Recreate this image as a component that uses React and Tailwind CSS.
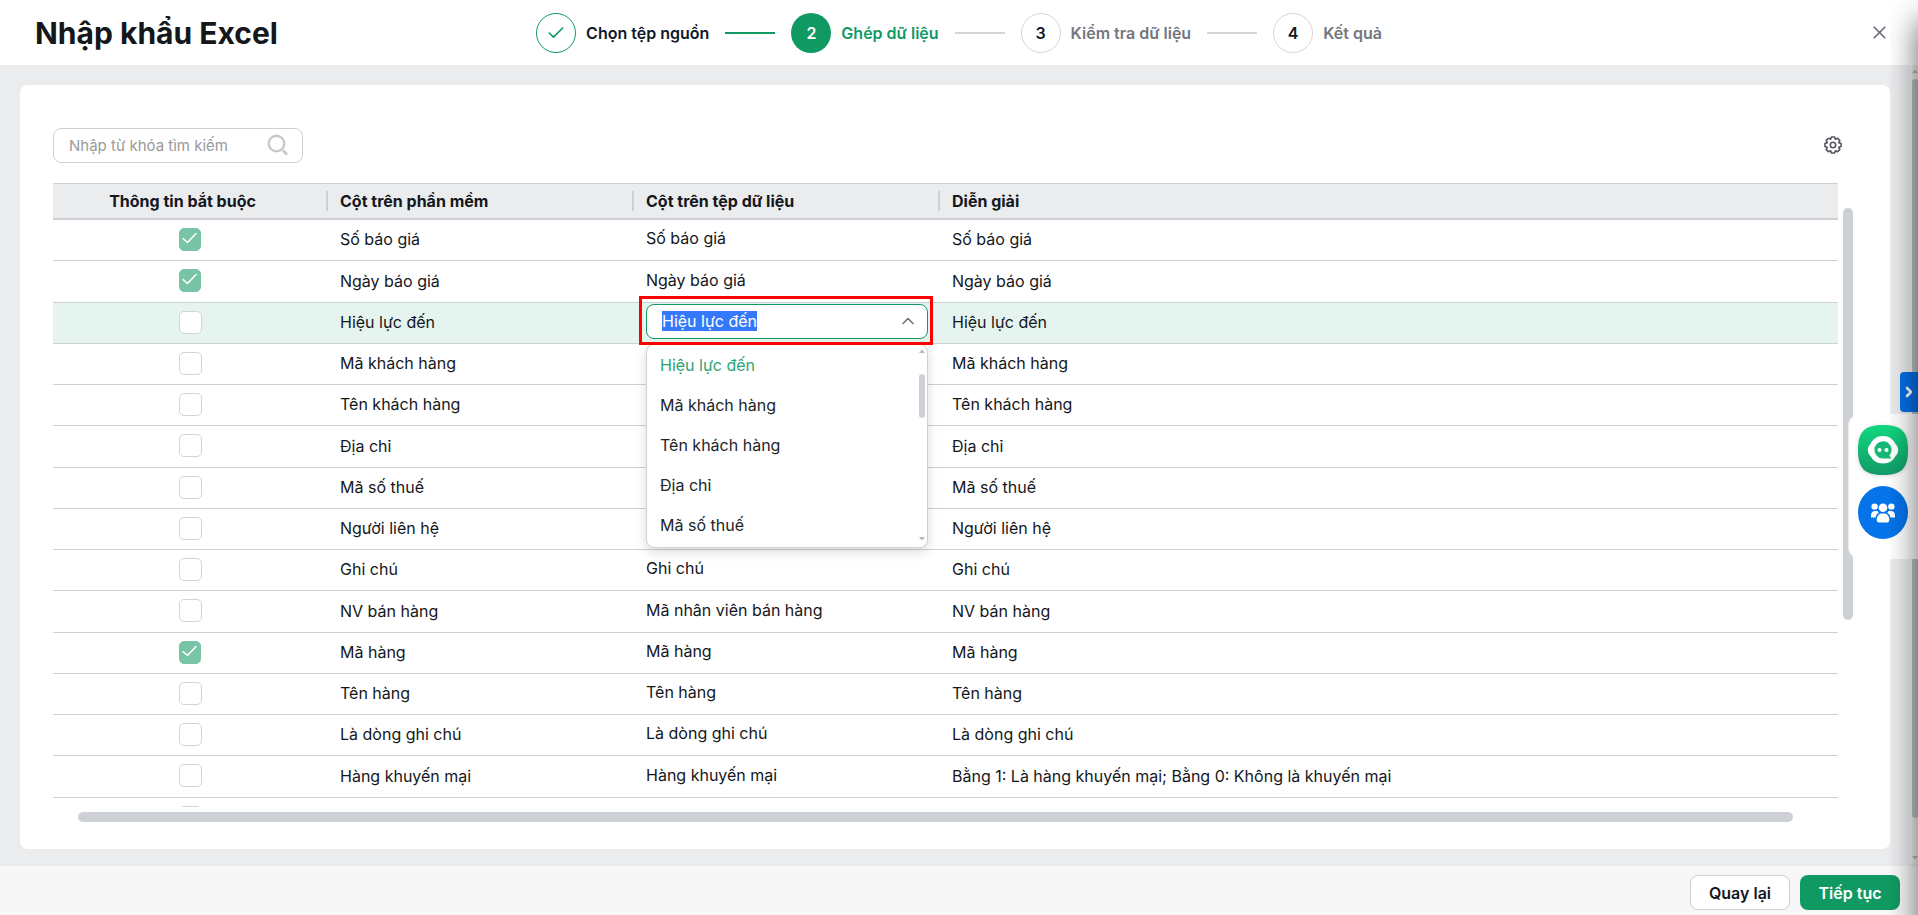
import React, { useEffect, useRef, useState } from 'react';
import { Check, ChevronRight, ChevronUp, X } from 'lucide-react';

const STEPS = [
  { label: 'Chọn tệp nguồn', state: 'done' },
  { label: 'Ghép dữ liệu', state: 'active' },
  { label: 'Kiểm tra dữ liệu', state: 'todo' },
  { label: 'Kết quả', state: 'todo' },
];

const ROWS = [
  { name: 'Số báo giá', column: 'Số báo giá', required: true },
  { name: 'Ngày báo giá', column: 'Ngày báo giá', required: true },
  { name: 'Hiệu lực đến', column: 'Hiệu lực đến', editing: true },
  { name: 'Mã khách hàng' },
  { name: 'Tên khách hàng' },
  { name: 'Địa chỉ' },
  { name: 'Mã số thuế' },
  { name: 'Người liên hệ' },
  { name: 'Ghi chú', column: 'Ghi chú' },
  { name: 'NV bán hàng', column: 'Mã nhân viên bán hàng' },
  { name: 'Mã hàng', column: 'Mã hàng', required: true },
  { name: 'Tên hàng', column: 'Tên hàng' },
  { name: 'Là dòng ghi chú', column: 'Là dòng ghi chú' },
  { name: 'Hàng khuyến mại', column: 'Hàng khuyến mại', note: 'Bằng 1: Là hàng khuyến mại; Bằng 0: Không là khuyến mại' },
  { name: '' },
];

const OPTIONS = ['Hiệu lực đến', 'Mã khách hàng', 'Tên khách hàng', 'Địa chỉ', 'Mã số thuế'];

const HEADERS = ['Thông tin bắt buộc', 'Cột trên phần mềm', 'Cột trên tệp dữ liệu', 'Diễn giải'];

const CIRCLE = {
  done: 'border border-[#119963] text-[#119963]',
  active: 'bg-[#119963] text-white',
  todo: 'border border-[#d5d5dc] text-[#111827]',
};

const LABEL = {
  done: 'text-[#111827]',
  active: 'text-[#119963]',
  todo: 'text-[#74767e]',
};

// eight rounded teeth around the centre of an 18x18 box
const gearPoints = Array.from({ length: 8 }, (_, i) =>
  [[-11, 8.2], [11, 8.2], [22.5, 6.2]].map(([offset, r]) => {
    const a = ((i * 45 + offset) * Math.PI) / 180;
    return `${(9 + r * Math.cos(a)).toFixed(2)},${(9 + r * Math.sin(a)).toFixed(2)}`;
  }).join(' ')
).join(' ');

const SearchIcon = () => (
  <svg viewBox="0 0 22 22" className="size-[22px]" fill="none" stroke="#c8c8c8" strokeWidth="2.4">
    <circle cx="9.5" cy="9.5" r="7.800" />
    <path d="M16 16.500l4 4" strokeWidth="3" />
  </svg>
);

const GearIcon = () => (
  <svg viewBox="0 0 18 18" className="size-[18px] overflow-visible" fill="none" stroke="#55575c" strokeWidth="1.6" strokeLinejoin="round">
    <polygon points={gearPoints} />
    <circle cx="9" cy="9" r="2.700" />
  </svg>
);

const ChatIcon = () => (
  <svg viewBox="0 0 50 50" className="size-[50px]">
    <defs>
      <linearGradient id="chat" x1="0" y1="0" x2="0" y2="1">
        <stop offset="0" stopColor="#10d880" />
        <stop offset="1" stopColor="#129a68" />
      </linearGradient>
    </defs>
    <path d="M25 0C43 0 50 6 50 25S43 50 25 50 0 44 0 25 7 0 25 0z" fill="url(#chat)" />
    <path d="M25 11c6 0 10.500 3.500 12.500 8 1.800 1.500 2.700 3.600 2.700 6s-.9 4.500-2.700 6c-2 4.500-6.500 7.500-12.500 7.500S14.500 35.500 12.500 31c-1.800-1.500-2.700-3.600-2.700-6s.9-4.500 2.700-6c2-4.500 6.500-8 12.500-8z" fill="#fff" />
    <path d="M25 16.200a8.600 8.600 0 1 0 0 17.200h8.400l-2-3a8.600 8.600 0 0 0-6.400-14.200z" fill="#14b876" />
    <circle cx="21.500" cy="25" r="2" fill="#fff" />
    <circle cx="28.500" cy="25" r="2" fill="#fff" />
  </svg>
);

const PeopleIcon = () => (
  <svg viewBox="0 0 26 20" className="h-5 w-[26px]" fill="#fff">
    <circle cx="4.600" cy="3.600" r="3.200" />
    <circle cx="21.400" cy="3.600" r="3.200" />
    <path d="M1 14.500v-2.300C1 9.600 2.800 8 5 8h2.500C8 9 8.400 9.500 9 10c-2.200.9-3.200 2.500-3.300 4.500z" />
    <path d="M25 14.500v-2.300C25 9.600 23.200 8 21 8h-2.500c-.5 1-.9 1.500-1.500 2 2.200.9 3.200 2.500 3.300 4.500z" />
    <circle cx="13" cy="4.800" r="4.300" />
    <path d="M6.700 17c0-4 2.300-6.500 5.300-6.500h2c3 0 5.300 2.500 5.300 6.500 0 1.600-.8 2.400-2.300 2.400H9c-1.500 0-2.300-.8-2.300-2.400z" />
  </svg>
);

const Arrow = ({ down, className = '' }) => (
  <svg viewBox="0 0 6 4" className={`h-1 w-1.5 ${className}`}>
    <path d={down ? 'M0 0h6L3 3.500z' : 'M0 4h6L3 .5z'} fill="#b4b8bd" />
  </svg>
);

const Stepper = () => (
  <ol className="flex items-center gap-4">
    {STEPS.map((step, i) => (
      <React.Fragment key={step.label}>
        {i > 0 && (
          <li aria-hidden="true" className={`h-0.5 w-[50px] ${i === 1 ? 'bg-[#119963]' : 'bg-[#d5d5dc]'}`} />
        )}
        <li className="flex items-center gap-2.5">
          <span className={`flex size-10 items-center justify-center rounded-full font-semibold ${CIRCLE[step.state]}`}>
            {step.state === 'done' ? <Check size={20} strokeWidth={2} /> : i + 1}
          </span>
          <span className={`font-semibold whitespace-nowrap ${LABEL[step.state]}`}>{step.label}</span>
        </li>
      </React.Fragment>
    ))}
  </ol>
);

const RequiredBox = ({ name, defaultChecked }) => (
  <label className="relative mx-auto block size-[23px]">
    <input
      type="checkbox"
      aria-label={`Bắt buộc ${name}`}
      defaultChecked={defaultChecked}
      className="peer block size-[23px] appearance-none rounded-[5px] border border-[#d2d4da] bg-white checked:w-[22px] checked:border-[#77c5a6] checked:bg-[#77c5a6]"
    />
    <svg
      viewBox="0 0 22 22"
      className="pointer-events-none absolute top-0 left-0 hidden size-[22px] peer-checked:block"
      fill="none" stroke="#fff" strokeWidth="1.6" strokeLinecap="round" strokeLinejoin="round"
    >
      <path d="M4 10.500l4.500 4L17 5.500" />
    </svg>
  </label>
);

const ColumnSelect = ({ value: initial }) => {
  const [value, setValue] = useState(initial);
  const inputRef = useRef(null);

  useEffect(() => {
    inputRef.current.focus();
    inputRef.current.select();
  }, []);

  return (
    <div className="relative">
      <input
        ref={inputRef}
        type="text"
        role="combobox"
        aria-expanded="true"
        aria-controls="column-options"
        aria-label="Cột trên tệp dữ liệu"
        value={value}
        onChange={(e) => setValue(e.target.value)}
        className="block h-[35px] w-full rounded-lg border border-[#119963] bg-white pr-10 pl-[15px] outline-none selection:bg-[#3579fb] selection:text-white"
      />
      <ChevronUp size={20} strokeWidth={1.8} className="absolute top-[7px] right-2.5 text-[#6b6e78]" />
      <div
        id="column-options"
        role="listbox"
        className="absolute top-10 left-0 z-10 w-full rounded-lg border border-[#cdd1d6] bg-white pb-0.5 text-[#212529] shadow-[0_4px_12px_rgba(0,0,0,0.15)]"
      >
        {OPTIONS.map((option) => (
          <div
            key={option}
            role="option"
            aria-selected={option === value}
            onClick={() => setValue(option)}
            className={`flex h-10 items-center px-[13px] ${option === value ? 'text-[#2ca574]' : ''}`}
          >
            {option}
          </div>
        ))}
        <Arrow className="absolute top-1 right-[2px]" />
        <div className="absolute top-[29px] right-[2px] h-11 w-1.5 rounded-full bg-[#cdd1d6]" />
        <Arrow down className="absolute right-[2px] bottom-1.5" />
      </div>
      <div className="pointer-events-none absolute -top-2 -right-[5px] -bottom-1.5 -left-[7px] z-20 border-3 border-[#ff0000]" />
    </div>
  );
};

const MappingTable = () => (
  <table className="w-full table-fixed border-separate border-spacing-0 text-left">
    <colgroup>
      <col className="w-[275px]" />
      <col className="w-[306px]" />
      <col className="w-[306px]" />
      <col />
    </colgroup>
    <thead>
      <tr>
        {HEADERS.map((header, i) => (
          <th
            key={header}
            className={`relative h-[37px] border-t border-b-2 border-[#cdd1d6] bg-[#ebecee] py-0 font-bold ${i === 0 ? 'pr-7 pl-3 text-center' : 'px-3'}`}
          >
            {header}
            {i < 3 && <span className="absolute top-[7px] right-0 h-5 w-0.5 bg-[#cdd1d6]" />}
          </th>
        ))}
      </tr>
    </thead>
    <tbody>
      {ROWS.map((row) => (
        <tr
          key={row.name}
          className={`h-[41px] nth-[4n+2]:h-[42px] *:border-b *:border-[#cdd1d6] *:px-3 *:pt-0 *:pb-0.5 ${row.editing ? 'bg-[#e5f4ef]' : ''}`}
        >
          <td>
            <RequiredBox name={row.name} defaultChecked={row.required} />
          </td>
          <td>{row.name}</td>
          <td>
            <div className="pb-0.5">{row.editing ? <ColumnSelect value={row.column} /> : row.column}</div>
          </td>
          <td>{row.note ?? row.name}</td>
        </tr>
      ))}
    </tbody>
  </table>
);

const SideWidgets = () => (
  <>
    <button
      type="button"
      aria-label="Mở bảng bên"
      className="absolute top-[372px] right-0 flex h-10 w-[18px] items-center justify-center rounded-l-[4px] bg-[#0070e8] text-white"
    >
      <ChevronRight size={16} strokeWidth={4} />
    </button>
    <div className="absolute top-[414px] right-0 flex h-[145px] w-[70px] flex-col items-center gap-[11px] rounded-l-xl border-l border-[#ececee] bg-white pt-[11px] pr-px">
      <button type="button" aria-label="Trợ lý" className="drop-shadow-sm">
        <ChatIcon />
      </button>
      <button
        type="button"
        aria-label="Cộng đồng"
        className="flex h-[53px] w-[50px] items-center justify-center rounded-[50%] bg-[#0573ea]"
      >
        <PeopleIcon />
      </button>
    </div>
  </>
);

export default function App() {
  return (
    <div className="relative flex h-screen flex-col overflow-hidden bg-[#ebecee] font-[Inter,'Noto_Sans',sans-serif] text-base leading-5 text-[#14171c]">
      <header className="grid h-[65px] shrink-0 grid-cols-[1fr_auto_1fr] items-center bg-white px-7">
        <h1 className="pl-[7px] text-[30px] leading-9 font-bold">Nhập khẩu Excel</h1>
        <Stepper />
        <button type="button" aria-label="Đóng" className="justify-self-end">
          <X size={21} strokeWidth={2} className="text-[#6b6e78]" />
        </button>
      </header>

      <main className="flex min-h-0 flex-1 pt-5 pr-7 pb-4 pl-5">
        <section className="flex min-w-0 flex-1 flex-col rounded-lg bg-white pt-[43px] pr-[37px] pb-[27px] pl-[33px]">
          <div className="flex shrink-0 items-center justify-between pr-[11px]">
            <label className="relative block">
              <input
                type="text"
                aria-label="Tìm kiếm"
                placeholder="Nhập từ khóa tìm kiếm"
                className="block h-[35px] w-[250px] rounded-lg border border-[#cdd1d6] bg-white pr-10 pl-[15px] text-[15px] outline-none placeholder:text-[#9a9a9a]"
              />
              <span className="pointer-events-none absolute top-1.5 right-3.5">
                <SearchIcon />
              </span>
            </label>
            <button type="button" aria-label="Thiết lập" className="pb-0.5">
              <GearIcon />
            </button>
          </div>

          <div className="mt-5 flex min-h-0 flex-1 gap-[5px]">
            <div className="min-w-0 flex-1 overflow-hidden">
              <MappingTable />
            </div>
            <div className="w-2.5 pt-[25px]">
              <div className="h-[412px] rounded-full bg-[#cdd1d6]" />
            </div>
          </div>
          <div className="mt-[5px] mr-[60px] ml-[25px] h-2.5 shrink-0 rounded-full bg-[#cdd1d6]" />
        </section>
      </main>

      <footer className="flex h-[50px] shrink-0 items-center justify-end gap-2.5 border-t border-[#e8e9eb] bg-[#f7f7f7] pt-1 pr-[18px] font-semibold">
        <button type="button" className="h-[35px] w-[100px] rounded-lg border border-[#cdd1d6] bg-white">
          Quay lại
        </button>
        <button type="button" className="h-[35px] w-[100px] rounded-lg bg-[#119963] text-white">
          Tiếp tục
        </button>
      </footer>

      {/* page scrollbar */}
      <div className="absolute top-[65px] right-0 bottom-[51px] flex w-2 flex-col items-center gap-1.5 border-l border-white bg-[#f1f1f2] pt-1 pb-1">
        <Arrow />
        <div className="mb-[42px] w-1.5 flex-1 rounded-full bg-[#bfc3c8]" />
        <Arrow down className="absolute bottom-1" />
      </div>

      <SideWidgets />

      {/* shadow cast by the panel docked past the right edge */}
      <div className="pointer-events-none absolute inset-y-0 right-0 w-7 overflow-hidden">
        <div className="absolute top-5 -bottom-10 left-full w-40 shadow-[0_0_30px_rgba(0,0,0,0.6)]" />
      </div>
    </div>
  );
}
